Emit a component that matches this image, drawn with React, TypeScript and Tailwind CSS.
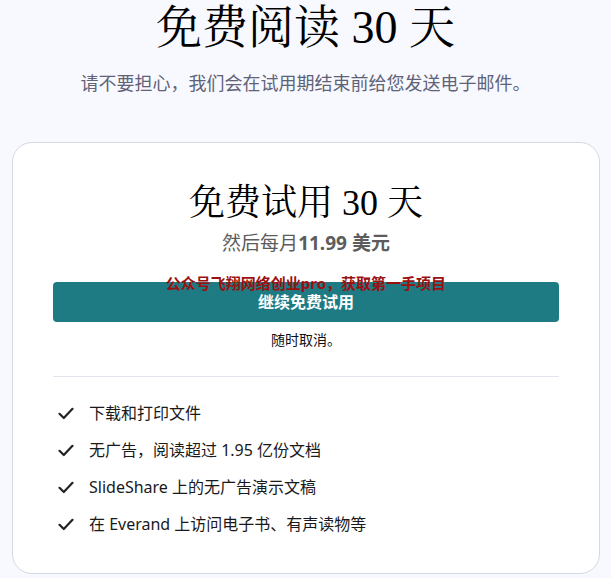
const serif = "font-['Liberation_Serif','Noto_Serif_CJK_SC','Noto_Sans_CJK_SC',serif]";

const features = [
  '下载和打印文件',
  '无广告，阅读超过 1.95 亿份文档',
  'SlideShare 上的无广告演示文稿',
  '在 Everand 上访问电子书、有声读物等',
];

function Check() {
  return (
    <svg width="16" height="13" viewBox="0 0 16 13" fill="none" className="shrink-0">
      <path d="M1.5 6.8 L5.8 11 L14.5 1.8" stroke="#222" strokeWidth="2.2" strokeLinecap="round" strokeLinejoin="round" />
    </svg>
  );
}

export default function App() {
  return (
    <main className="min-h-[578px] w-[611px] bg-[#f8f9fe] flex flex-col items-center font-['Noto_Sans','Noto_Sans_CJK_SC',sans-serif]">
      {/* page heading */}
      <h1 className={`${serif} text-[46px] leading-[55px] text-black`}>免费阅读 30 天</h1>
      <p className="mt-[14px] text-[18px] leading-[28px] text-[#5f6278]">
        请不要担心，我们会在试用期结束前给您发送电子邮件。
      </p>

      {/* plan card */}
      <div className="mt-[45px] w-[588px] self-start ml-[12px] rounded-[20px] border border-[#d5d9e3] bg-white px-[40px] pt-[38px] pb-[37px]">
        <div className="flex flex-col items-center">
          <h2 className={`${serif} text-[36px] leading-[44px] text-black`}>免费试用 30 天</h2>
          <p className="mt-[5px] text-[19px] leading-[26px] text-[#5c5c5c]">
            然后每月<span className="font-bold">11.99 美元</span>
          </p>

          <div className="relative mt-[26px] w-full">
            <button className="h-[40px] w-full rounded-[4px] bg-[#1e7b84] text-[16px] font-bold text-white">
              继续免费试用
            </button>
            <span className="pointer-events-none absolute left-0 right-0 top-[-6px] text-center text-[15px] leading-[15px] font-bold text-[#9b1010]">
              公众号飞翔网络创业pro，获取第一手项目
            </span>
          </div>

          <p className="mt-[8px] text-[14px] leading-[20px] text-[#111]">随时取消。</p>
        </div>

        <div className="mt-[26px] border-t border-[#e2e5ef]" />

        <ul className="mt-[24px] flex flex-col gap-[13px]">
          {features.map((f) => (
            <li key={f} className="flex items-center gap-[15px] pl-[5px] text-[16px] leading-[24px] text-[#1a1a1a]">
              <Check />
              <span>{f}</span>
            </li>
          ))}
        </ul>
      </div>
    </main>
  );
}
